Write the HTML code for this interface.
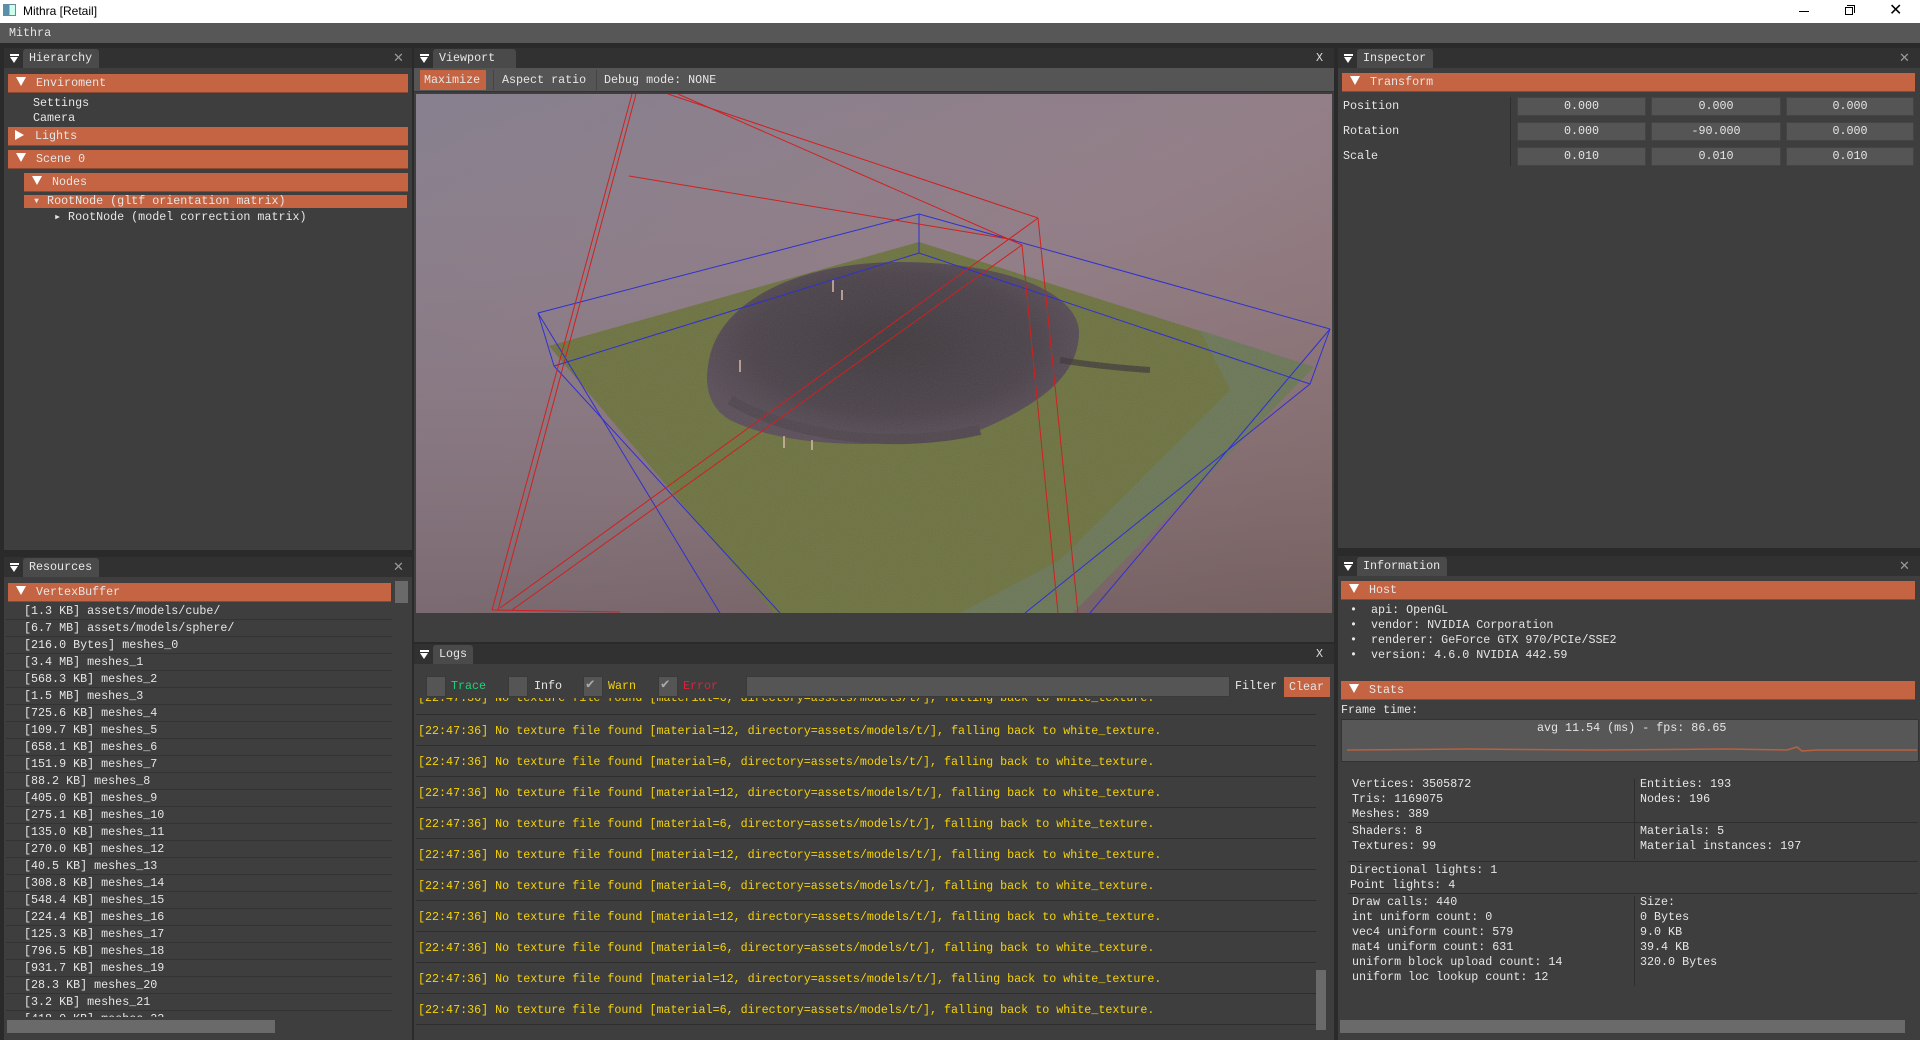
<!DOCTYPE html>
<html><head><meta charset="utf-8">
<style>
*{margin:0;padding:0;box-sizing:border-box}
body{width:1920px;height:1040px;overflow:hidden;background:#2a2a2a;font-family:"Liberation Mono",monospace;font-size:11.7px;color:#e6e6e6;position:relative}
div,span{position:absolute}
.t{white-space:pre;line-height:15px}
.pan{background:#3e3e3e}
.tb{background:#313131;height:20px}
.tab{background:#4a4a4a;height:19px;top:1px;border-radius:3px 3px 0 0;padding:2px 0 0 6px;line-height:15px;white-space:pre;color:#e8e8e8}
.ham{width:9px;height:9px;top:6px}
.ham:before{content:"";position:absolute;left:0;top:0;width:9px;height:2px;background:#fff}
.ham:after{content:"";position:absolute;left:0;top:3px;border-left:4.5px solid transparent;border-right:4.5px solid transparent;border-top:6px solid #fff}
.x{color:#9a9a9a;font-family:"Liberation Sans",sans-serif;font-size:13px;top:2px}
.hd{background:#c46443;height:19px;border-bottom:1px solid #8a4a32;line-height:18px;white-space:pre}
.dn{display:inline-block;width:0;height:0;border-left:5px solid transparent;border-right:5px solid transparent;border-top:9px solid #fff;vertical-align:middle;margin:0 10px 0 2px;position:relative;top:-1px}
.rt{display:inline-block;width:0;height:0;border-top:5px solid transparent;border-bottom:5px solid transparent;border-left:9px solid #fff;vertical-align:middle;margin:0 11px 0 3px;position:relative;top:-1px}
.fld{background:#555;height:19px;border:1px solid #444;text-align:center;line-height:17px}
.lg{color:#f5d20a;left:418px;white-space:pre;line-height:15px}
.ls{left:416px;width:900px;height:1px;background:#2e2e2e}
.cb{width:20px;height:21px;background:#555;border:1px solid #3a3a3a}
</style></head><body>
<div style="left:0;top:0;width:1920px;height:23px;background:#fff"></div>
<div style="left:3px;top:4px;width:13px;height:12px;border:1px solid #6a8aa0;background:linear-gradient(90deg,#5a8fa8 50%,#cfe 50%)"></div>
<div class="t" style="left:23px;top:3px;color:#000;font-family:'Liberation Sans',sans-serif;font-size:12px;line-height:16px">Mithra [Retail]</div>
<div style="left:1799px;top:11px;width:10px;height:1px;background:#000"></div>
<div style="left:1845px;top:7px;width:8px;height:8px;border:1px solid #000"></div>
<div style="left:1847px;top:5px;width:8px;height:8px;border-top:1px solid #000;border-right:1px solid #000"></div>
<div class="t" style="left:1889px;top:2px;color:#000;font-family:'Liberation Sans',sans-serif;font-size:16px;line-height:18px">✕</div>
<div style="left:0;top:23px;width:1920px;height:21px;background:#575757;border-bottom:1px solid #2a2a2a"></div>
<div class="t" style="left:9px;top:26px">Mithra</div>

<div class="pan" style="left:4px;top:48px;width:408px;height:502px"></div>
<div class="tb" style="left:4px;top:48px;width:408px"></div>
<div class="ham" style="left:10px;top:54px"></div>
<div class="tab" style="left:23px;top:49px;width:76px">Hierarchy</div>
<div class="x" style="left:393px;top:50px">✕</div>
<div class="hd" style="left:8px;top:74px;width:400px"><span class="dn" style="position:relative;margin-left:8px"></span>Enviroment</div>
<div class="t" style="left:33px;top:96px">Settings</div>
<div class="t" style="left:33px;top:111px">Camera</div>
<div class="hd" style="left:8px;top:127px;width:400px"><span class="rt" style="position:relative;margin-left:7px"></span>Lights</div>
<div class="hd" style="left:8px;top:150px;width:400px"><span class="dn" style="position:relative;margin-left:8px"></span>Scene 0</div>
<div class="hd" style="left:24px;top:173px;width:384px"><span class="dn" style="position:relative;margin-left:8px"></span>Nodes</div>
<div style="left:24px;top:195px;width:383px;height:13px;background:#c46443"></div>
<div class="t" style="left:33px;top:194px;line-height:14px">▾ RootNode (gltf orientation matrix)</div>
<div class="t" style="left:54px;top:210px">▸ RootNode (model correction matrix)</div>

<div class="pan" style="left:4px;top:557px;width:408px;height:483px"></div>
<div class="tb" style="left:4px;top:557px;width:408px"></div>
<div class="ham" style="left:10px;top:563px"></div>
<div class="tab" style="left:23px;top:558px;width:76px">Resources</div>
<div class="x" style="left:393px;top:559px">✕</div>
<div class="hd" style="left:8px;top:583px;width:383px"><span class="dn" style="position:relative;margin-left:8px"></span>VertexBuffer</div>
<div style="left:395px;top:581px;width:13px;height:22px;background:#6a6a6a"></div>
<div style="left:6px;top:603px;width:386px;height:414px;overflow:hidden">
<div class="t" style="position:relative;left:18px;top:0;line-height:17px;color:#e6e6e6">[1.3 KB] assets/models/cube/
[6.7 MB] assets/models/sphere/
[216.0 Bytes] meshes_0
[3.4 MB] meshes_1
[568.3 KB] meshes_2
[1.5 MB] meshes_3
[725.6 KB] meshes_4
[109.7 KB] meshes_5
[658.1 KB] meshes_6
[151.9 KB] meshes_7
[88.2 KB] meshes_8
[405.0 KB] meshes_9
[275.1 KB] meshes_10
[135.0 KB] meshes_11
[270.0 KB] meshes_12
[40.5 KB] meshes_13
[308.8 KB] meshes_14
[548.4 KB] meshes_15
[224.4 KB] meshes_16
[125.3 KB] meshes_17
[796.5 KB] meshes_18
[931.7 KB] meshes_19
[28.3 KB] meshes_20
[3.2 KB] meshes_21
[418.0 KB] meshes_22</div>
<div style="left:0;top:0;width:386px;height:414px;background:repeating-linear-gradient(180deg,transparent 0,transparent 16px,#333 16px,#333 17px)"></div>
</div>
<div style="left:7px;top:1020px;width:268px;height:13px;background:#6a6a6a"></div>

<div class="pan" style="left:414px;top:48px;width:920px;height:594px"></div>
<div class="tb" style="left:414px;top:48px;width:920px"></div>
<div class="ham" style="left:420px;top:54px"></div>
<div class="tab" style="left:433px;top:49px;width:83px">Viewport</div>
<div class="t" style="left:1316px;top:51px;color:#ddd">X</div>
<div style="left:414px;top:68px;width:920px;height:24px;background:#555;border-bottom:1px solid #333"></div>
<div style="left:420px;top:70px;width:66px;height:20px;background:#c46443"></div>
<div class="t" style="left:424px;top:73px">Maximize</div>
<div style="left:493px;top:70px;width:1px;height:20px;background:#444"></div>
<div class="t" style="left:502px;top:73px">Aspect ratio</div>
<div style="left:596px;top:70px;width:1px;height:20px;background:#444"></div>
<div class="t" style="left:604px;top:73px">Debug mode: NONE</div>
<svg style="position:absolute;left:416px;top:94px" width="916" height="519" viewBox="416 94 916 519">
<defs>
<linearGradient id="sky" x1="0" y1="0" x2="1" y2="1">
<stop offset="0" stop-color="#87808f"/><stop offset="0.5" stop-color="#937f88"/><stop offset="1" stop-color="#8a6e6a"/>
</linearGradient>
<linearGradient id="sky2" x1="0" y1="0" x2="0" y2="1">
<stop offset="0" stop-color="#a08a92" stop-opacity="0"/><stop offset="1" stop-color="#5d5055" stop-opacity="0.45"/>
</linearGradient>
<radialGradient id="cas" cx="0.5" cy="0.45" r="0.55">
<stop offset="0" stop-color="#3f3a3e"/><stop offset="0.7" stop-color="#4b424a"/><stop offset="1" stop-color="#5a4e58"/>
</radialGradient>
<filter id="nz"><feTurbulence type="fractalNoise" baseFrequency="0.9" numOctaves="2" result="n"/><feColorMatrix type="saturate" values="0"/><feComponentTransfer><feFuncA type="linear" slope="0.35"/></feComponentTransfer><feComposite in2="SourceGraphic" operator="in"/></filter>
</defs>
<rect x="416" y="94" width="916" height="519" fill="url(#sky)"/>
<rect x="416" y="94" width="916" height="519" fill="url(#sky2)"/>
<polygon points="919,242 1314,367 1073,613 774,613 549,346" fill="#6d7240"/>
<polygon points="1200,330 1314,367 1073,613 960,613 1060,560 1150,470 1230,390" fill="#6a7a68" opacity="0.55"/>
<path d="M709,360 C720,300 800,262 900,262 C1000,262 1075,290 1079,330 C1080,370 1050,400 980,430 C900,450 790,450 730,420 C705,405 705,380 709,360Z" fill="url(#cas)"/>
<path d="M730,400 C800,440 900,448 980,430" stroke="#50464e" stroke-width="10" fill="none"/>
<path d="M1060,360 C1090,365 1120,368 1150,370" stroke="#3a3538" stroke-width="6" fill="none" opacity="0.7"/>
<polygon points="919,242 1314,367 1073,613 774,613 549,346" fill="#fff" filter="url(#nz)" opacity="0.35"/>
<g stroke="#d8b8a8" stroke-width="1.5">
<line x1="784" y1="436" x2="784" y2="448"/><line x1="812" y1="440" x2="812" y2="450"/><line x1="842" y1="290" x2="842" y2="300"/><line x1="833" y1="280" x2="833" y2="292"/><line x1="740" y1="360" x2="740" y2="372"/>
</g>
<g stroke="#3030d0" stroke-width="1" fill="none">
<polyline points="538,313 919,214 1330,329"/>
<polyline points="554,366 919,253 1310,384"/>
<line x1="538" y1="313" x2="554" y2="366"/>
<line x1="919" y1="214" x2="919" y2="253"/>
<line x1="1330" y1="329" x2="1310" y2="384"/>
<line x1="554" y1="366" x2="780" y2="613"/>
<line x1="1310" y1="384" x2="1025" y2="613"/>
<line x1="538" y1="313" x2="720" y2="613"/>
<line x1="1330" y1="329" x2="1090" y2="613"/>
</g>
<g stroke="#d02020" stroke-width="1" fill="none">
<line x1="632" y1="94" x2="492" y2="610"/>
<line x1="636" y1="94" x2="498" y2="610"/>
<line x1="629" y1="176" x2="1015" y2="240"/>
<line x1="668" y1="94" x2="1038" y2="218"/>
<line x1="678" y1="94" x2="1022" y2="245"/>
<line x1="1038" y1="218" x2="1078" y2="613"/>
<line x1="1022" y1="245" x2="1058" y2="613"/>
<line x1="1038" y1="218" x2="500" y2="608"/>
<line x1="1022" y1="245" x2="512" y2="610"/>
<line x1="492" y1="610" x2="620" y2="612"/>
</g>
</svg>

<div class="pan" style="left:414px;top:644px;width:920px;height:396px"></div>
<div class="tb" style="left:414px;top:644px;width:920px"></div>
<div class="ham" style="left:420px;top:650px"></div>
<div class="tab" style="left:433px;top:645px;width:40px">Logs</div>
<div class="t" style="left:1316px;top:647px;color:#ddd">X</div>
<div class="cb" style="left:426px;top:676px"></div>
<div class="t" style="left:451px;top:679px;color:#21d07a">Trace</div>
<div class="cb" style="left:508px;top:676px"></div>
<div class="t" style="left:534px;top:679px">Info</div>
<div class="cb" style="left:583px;top:676px"></div>
<div class="t" style="left:586px;top:678px;color:#aaa;font-size:14px">✔</div>
<div class="t" style="left:608px;top:679px;color:#f5d20a">Warn</div>
<div class="cb" style="left:658px;top:676px"></div>
<div class="t" style="left:661px;top:678px;color:#aaa;font-size:14px">✔</div>
<div class="t" style="left:683px;top:679px;color:#e0203a">Error</div>
<div style="left:746px;top:676px;width:484px;height:21px;background:#555;border:1px solid #3a3a3a"></div>
<div class="t" style="left:1235px;top:679px">Filter</div>
<div style="left:1284px;top:677px;width:46px;height:20px;background:#c46443"></div>
<div class="t" style="left:1289px;top:680px">Clear</div>
<div style="left:414px;top:698px;width:910px;height:324px;overflow:hidden">
<div class="lg" style="left:4px;top:-7px">[22:47:36] No texture file found [material=6, directory=assets/models/t/], falling back to white_texture.</div>
</div>
<div class="ls" style="top:714px"></div>
<div class="lg" style="top:724px">[22:47:36] No texture file found [material=12, directory=assets/models/t/], falling back to white_texture.</div>
<div class="ls" style="top:745px"></div>
<div class="lg" style="top:755px">[22:47:36] No texture file found [material=6, directory=assets/models/t/], falling back to white_texture.</div>
<div class="ls" style="top:776px"></div>
<div class="lg" style="top:786px">[22:47:36] No texture file found [material=12, directory=assets/models/t/], falling back to white_texture.</div>
<div class="ls" style="top:807px"></div>
<div class="lg" style="top:817px">[22:47:36] No texture file found [material=6, directory=assets/models/t/], falling back to white_texture.</div>
<div class="ls" style="top:838px"></div>
<div class="lg" style="top:848px">[22:47:36] No texture file found [material=12, directory=assets/models/t/], falling back to white_texture.</div>
<div class="ls" style="top:869px"></div>
<div class="lg" style="top:879px">[22:47:36] No texture file found [material=6, directory=assets/models/t/], falling back to white_texture.</div>
<div class="ls" style="top:900px"></div>
<div class="lg" style="top:910px">[22:47:36] No texture file found [material=12, directory=assets/models/t/], falling back to white_texture.</div>
<div class="ls" style="top:931px"></div>
<div class="lg" style="top:941px">[22:47:36] No texture file found [material=6, directory=assets/models/t/], falling back to white_texture.</div>
<div class="ls" style="top:962px"></div>
<div class="lg" style="top:972px">[22:47:36] No texture file found [material=12, directory=assets/models/t/], falling back to white_texture.</div>
<div class="ls" style="top:993px"></div>
<div class="lg" style="top:1003px">[22:47:36] No texture file found [material=6, directory=assets/models/t/], falling back to white_texture.</div>
<div class="ls" style="top:1024px"></div>
<div style="left:1316px;top:970px;width:10px;height:60px;background:#6a6a6a"></div>

<div class="pan" style="left:1338px;top:48px;width:582px;height:500px"></div>
<div class="tb" style="left:1338px;top:48px;width:582px"></div>
<div class="ham" style="left:1344px;top:54px"></div>
<div class="tab" style="left:1357px;top:49px;width:76px">Inspector</div>
<div class="x" style="left:1899px;top:50px">✕</div>
<div class="hd" style="left:1342px;top:73px;width:573px"><span class="dn" style="position:relative;margin-left:8px"></span>Transform</div>
<div style="left:1510px;top:97px;width:1px;height:69px;background:#2e2e2e"></div>
<div class="t" style="left:1343px;top:99px">Position</div>
<div class="t" style="left:1343px;top:124px">Rotation</div>
<div class="t" style="left:1343px;top:149px">Scale</div>
<div class="fld" style="left:1517px;top:97px;width:129px">0.000</div>
<div class="fld" style="left:1651px;top:97px;width:130px">0.000</div>
<div class="fld" style="left:1786px;top:97px;width:128px">0.000</div>
<div class="fld" style="left:1517px;top:122px;width:129px">0.000</div>
<div class="fld" style="left:1651px;top:122px;width:130px">-90.000</div>
<div class="fld" style="left:1786px;top:122px;width:128px">0.000</div>
<div class="fld" style="left:1517px;top:147px;width:129px">0.010</div>
<div class="fld" style="left:1651px;top:147px;width:130px">0.010</div>
<div class="fld" style="left:1786px;top:147px;width:128px">0.010</div>

<div class="pan" style="left:1338px;top:556px;width:582px;height:484px"></div>
<div class="tb" style="left:1338px;top:556px;width:582px"></div>
<div class="ham" style="left:1344px;top:562px"></div>
<div class="tab" style="left:1357px;top:557px;width:90px">Information</div>
<div class="x" style="left:1899px;top:558px">✕</div>
<div class="hd" style="left:1341px;top:581px;width:574px"><span class="dn" style="position:relative;margin-left:8px"></span>Host</div>
<div class="t" style="left:1350px;top:603px;line-height:15px">•  api: OpenGL
•  vendor: NVIDIA Corporation
•  renderer: GeForce GTX 970/PCIe/SSE2
•  version: 4.6.0 NVIDIA 442.59</div>
<div class="hd" style="left:1341px;top:681px;width:574px"><span class="dn" style="position:relative;margin-left:8px"></span>Stats</div>
<div class="t" style="left:1341px;top:703px">Frame time:</div>
<div style="left:1341px;top:719px;width:578px;height:43px;background:#575757;border:1px solid #333"></div>
<div class="t" style="left:1537px;top:721px">avg 11.54 (ms) - fps: 86.65</div>
<svg style="position:absolute;left:1347px;top:745px" width="570" height="10"><polyline points="0,5 120,4 250,5 380,4 440,5 450,2 455,6 470,5 570,5" stroke="#b8603f" stroke-width="1.5" fill="none"/></svg>
<div style="left:1634px;top:779px;width:1px;height:80px;background:#2e2e2e"></div>
<div style="left:1634px;top:896px;width:1px;height:90px;background:#2e2e2e"></div>
<div style="left:1348px;top:822px;width:570px;height:1px;background:#2e2e2e"></div>
<div style="left:1348px;top:861px;width:570px;height:1px;background:#2e2e2e"></div>
<div style="left:1348px;top:893px;width:570px;height:1px;background:#2e2e2e"></div>
<div class="t" style="left:1352px;top:777px">Vertices: 3505872
Tris: 1169075
Meshes: 389</div>
<div class="t" style="left:1640px;top:777px">Entities: 193
Nodes: 196</div>
<div class="t" style="left:1352px;top:824px">Shaders: 8
Textures: 99</div>
<div class="t" style="left:1640px;top:824px">Materials: 5
Material instances: 197</div>
<div class="t" style="left:1350px;top:863px">Directional lights: 1
Point lights: 4</div>
<div class="t" style="left:1352px;top:895px">Draw calls: 440
int uniform count: 0
vec4 uniform count: 579
mat4 uniform count: 631
uniform block upload count: 14
uniform loc lookup count: 12</div>
<div class="t" style="left:1640px;top:895px">Size:
0 Bytes
9.0 KB
39.4 KB
320.0 Bytes</div>
<div style="left:1340px;top:1020px;width:565px;height:13px;background:#6a6a6a"></div>
</body></html>
